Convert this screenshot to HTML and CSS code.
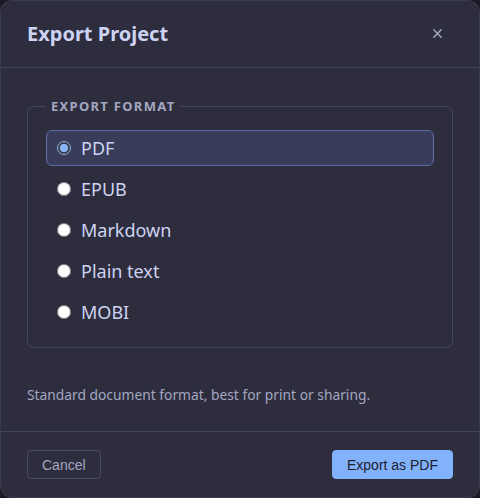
FILE: index.html
```html
<!DOCTYPE html>
<html lang="en">
<head>
    <meta charset="UTF-8">
    <meta name="viewport" content="width=device-width, initial-scale=1.0">
    <title>Export Project</title>
    <link rel="stylesheet" href="styles.css">
</head>
<body>
    <div class="dialog" role="dialog" aria-labelledby="dialogTitle">
        <div class="dialog-header">
            <h2 id="dialogTitle">Export Project</h2>
            <button class="close-btn" aria-label="Close">
                <svg width="11" height="11" viewBox="0 0 12 12" fill="none" stroke="currentColor" stroke-width="1.6" stroke-linecap="round">
                    <path d="M2 2l8 8M10 2l-8 8"/>
                </svg>
            </button>
        </div>

        <div class="dialog-body">
            <fieldset class="format-group">
                <legend>Export format</legend>
                <label class="option selected">
                    <input type="radio" name="format" value="pdf" checked>
                    <span>PDF</span>
                </label>
                <label class="option">
                    <input type="radio" name="format" value="epub">
                    <span>EPUB</span>
                </label>
                <label class="option">
                    <input type="radio" name="format" value="md">
                    <span>Markdown</span>
                </label>
                <label class="option">
                    <input type="radio" name="format" value="txt">
                    <span>Plain text</span>
                </label>
                <label class="option">
                    <input type="radio" name="format" value="mobi">
                    <span>MOBI</span>
                </label>
            </fieldset>

            <p class="hint">Standard document format, best for print or sharing.</p>
        </div>

        <div class="dialog-footer">
            <button class="btn btn-secondary">Cancel</button>
            <button class="btn btn-primary">Export as PDF</button>
        </div>
    </div>
</body>
</html>
```

FILE: styles.css
```css
:root {
    --bg-color: #1b1b26;
    --dialog-color: #2e2d3e;
    --line-color: #45455a;
    --text-color: #cdd3f2;
    --muted-color: #a3a7c0;
    --accent-color: #89b4fa;
}

* {
    margin: 0;
    padding: 0;
    box-sizing: border-box;
}

body {
    background-color: var(--bg-color);
    font-family: 'Noto Sans', sans-serif;
    color: var(--text-color);
}

.dialog {
    width: 480px;
    height: 498px;
    background-color: var(--dialog-color);
    border: 1px solid #3b3b4e;
    border-radius: 12px;
    display: flex;
    flex-direction: column;
}

.dialog-header {
    display: flex;
    justify-content: space-between;
    align-items: center;
    padding: 19px 26px 19px 26px;
    border-bottom: 1px solid var(--line-color);
}

.dialog-header h2 {
    font-size: 20px;
    font-weight: 700;
    line-height: 28px;
    color: var(--text-color);
}

.close-btn {
    background: none;
    border: none;
    color: var(--muted-color);
    width: 24px;
    height: 24px;
    display: flex;
    align-items: center;
    justify-content: center;
    margin-right: 4px;
    margin-top: -1px;
    cursor: pointer;
}

.dialog-body {
    flex: 1;
    padding: 29px 26px 0;
}

.format-group {
    border: 1px solid var(--line-color);
    border-radius: 6px;
    padding: 15px 18px 17px;
    display: flex;
    flex-direction: column;
    gap: 5px;
}

.format-group legend {
    padding: 0 5px;
    font-size: 13px;
    font-weight: 700;
    line-height: 18px;
    letter-spacing: 0.1em;
    text-transform: uppercase;
    color: var(--muted-color);
}

.option {
    display: flex;
    align-items: center;
    gap: 10px;
    height: 36px;
    padding: 0 10px;
    border: 1px solid transparent;
    border-radius: 6px;
    font-size: 18px;
    color: var(--text-color);
    cursor: pointer;
}

.option.selected {
    background-color: #3a3d5a;
    border-color: #5a6ea4;
}

.option input {
    width: 14px;
    height: 14px;
    margin: 0;
    accent-color: var(--accent-color);
}

.hint {
    margin-top: 37px;
    font-size: 13.8px;
    line-height: 20px;
    color: var(--muted-color);
}

.dialog-footer {
    display: flex;
    justify-content: space-between;
    align-items: center;
    padding: 18px 26px 18px;
    border-top: 1px solid var(--line-color);
}

.btn {
    height: 29px;
    padding: 0 14px;
    border-radius: 4px;
    font-family: 'Liberation Sans', Arial, sans-serif;
    font-size: 14px;
    cursor: pointer;
}

.btn-secondary {
    background: transparent;
    border: 1px solid #4a4a5e;
    color: var(--muted-color);
}

.btn-primary {
    background-color: #82b2f9;
    border: 1px solid #82b2f9;
    color: #1e2030;
}
```
